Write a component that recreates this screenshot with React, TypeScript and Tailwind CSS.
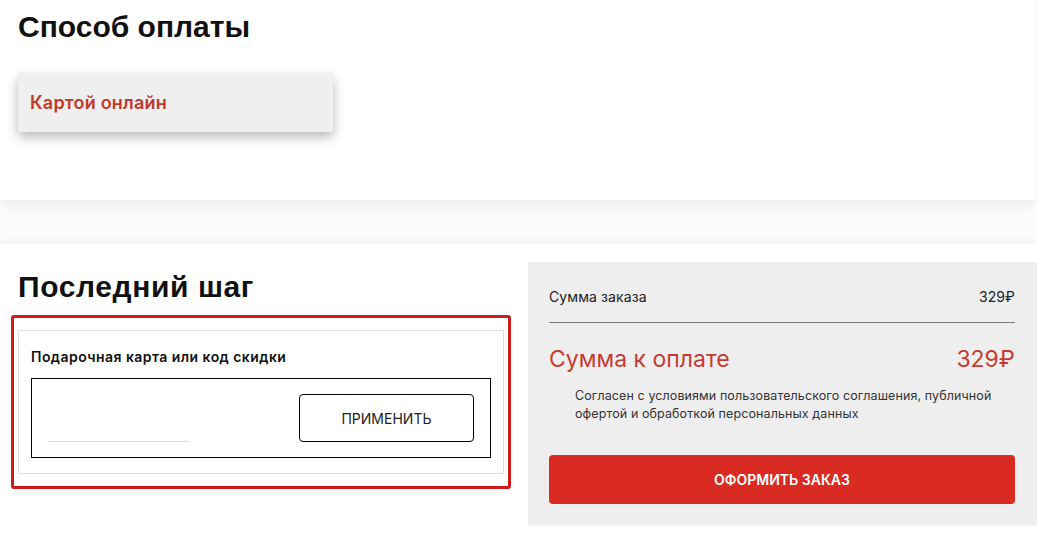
import * as React from 'react';

const body = { fontFamily: 'Inter, "Noto Sans", "DejaVu Sans", sans-serif' };
const head = { fontFamily: '"Liberation Sans", Arial, sans-serif' };

function PaymentMethod() {
  return (
    <section className="h-[200px] w-[1036px] bg-white px-[18px] pt-[10px] shadow-[0_3px_14px_rgba(0,0,0,0.08)]">
      <h2 style={head} className="text-[30px] font-bold leading-[34px] text-[#111]">
        Способ оплаты
      </h2>
      <div className="mt-[29px] flex h-[59px] w-[315px] items-center rounded-[2px] bg-[#efefef] px-[12px] shadow-[0_5px_12px_rgba(0,0,0,0.28)]">
        <span className="text-[18px] font-semibold tracking-[0.2px] text-[#c0392b]">Картой онлайн</span>
      </div>
    </section>
  );
}

function Promo() {
  return (
    <div className="rounded-[3px] border-[3px] border-[#cc1b1b] px-[4px] py-[12px]">
      <div className="border border-[#dcdcdc] px-[12px] pb-[15px] pt-[17px]">
        <div className="text-[14px] font-semibold leading-[18px] tracking-[0.45px] text-[#111]">
          Подарочная карта или код скидки
        </div>
        <div className="mt-[12px] flex h-[80px] items-end justify-between border border-black px-[16px] pb-[15px]">
          <div className="h-px w-[141px] bg-[#dcdcdc]" />
          <button className="flex h-[48px] w-[175px] items-center justify-center rounded-[4px] border border-black text-[14px] text-[#222]">
            ПРИМЕНИТЬ
          </button>
        </div>
      </div>
    </div>
  );
}

function Summary() {
  return (
    <div className="mt-[18px] h-[263px] flex-1 bg-[#eeeeee] pl-[21px] pr-[22px] pt-[24px]">
      <div className="flex h-[20px] items-center justify-between text-[14px] tracking-[0.1px] text-[#222]">
        <span>Сумма заказа</span>
        <span>329₽</span>
      </div>
      <div className="mt-[16px] h-px bg-[#777]" />
      <div className="mt-[21px] flex h-[30px] items-center justify-between text-[23px] text-[#c43b33]">
        <span>Сумма к оплате</span>
        <span>329₽</span>
      </div>
      <p className="mt-[13px] pl-[26px] text-[12.5px] leading-[18px] tracking-[0.1px] text-[#333]">
        Согласен с условиями пользовательского соглашения, публичной
        <br />
        офертой и обработкой персональных данных
      </p>
      <button className="mt-[32px] flex h-[49px] w-full items-center justify-center rounded-[4px] bg-[#d92b22] text-[14px] font-semibold text-white">
        ОФОРМИТЬ ЗАКАЗ
      </button>
    </div>
  );
}

export default function App() {
  return (
    <div style={body} className="h-[547px] w-[1037px] overflow-hidden bg-[#fbfbfb]">
      <PaymentMethod />
      <section className="mt-[44px] flex w-[1037px] bg-white pb-[40px] pt-[26px] shadow-[0_-3px_10px_rgba(0,0,0,0.04)]">
        <div className="w-[511px] pl-[11px]">
          <h2 style={head} className="ml-[7px] text-[30px] font-bold leading-[34px] tracking-[0.6px] text-[#111]">
            Последний шаг
          </h2>
          <div className="mt-[11px]">
            <Promo />
          </div>
        </div>
        <div className="ml-[17px] flex flex-1 -mt-[26px]">
          <Summary />
        </div>
      </section>
    </div>
  );
}
